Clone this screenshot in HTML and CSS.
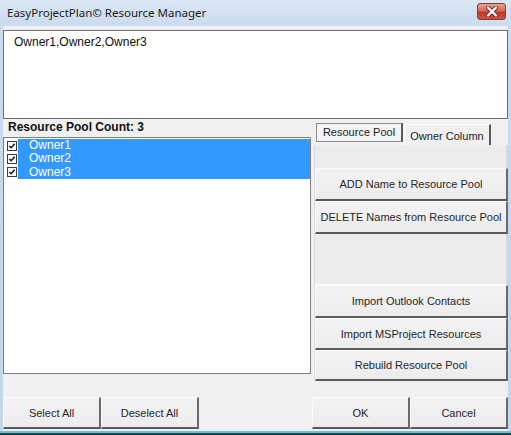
FILE: index.html
```html
<!DOCTYPE html>
<html>
<head>
<meta charset="utf-8">
<link rel="stylesheet" href="styles.css">
</head>
<body>
<div class="window">
  <div class="titlebar">
    <span class="title">EasyProjectPlan© Resource Manager</span>
    <div class="close">
      <svg width="14" height="11" viewBox="0 0 14 11"><path d="M3 1.5 L11 9.5 M11 1.5 L3 9.5" stroke="#6a2a22" stroke-width="4" stroke-linecap="round"/><path d="M3 1.5 L11 9.5 M11 1.5 L3 9.5" stroke="#fff" stroke-width="2.4" stroke-linecap="round"/></svg>
    </div>
  </div>
  <div class="client">
    <div class="textbox">Owner1,Owner2,Owner3</div>
    <div class="main">
      <div class="left">
        <div class="count">Resource Pool Count: 3</div>
        <div class="listbox">
          <div class="row"><span class="check"><svg width="9" height="9" viewBox="0 0 9 9"><path d="M1.5 4.5 L3.5 6.5 L7.5 2" fill="none" stroke="#111" stroke-width="1.6"/></svg></span><span class="item">Owner1</span></div>
          <div class="row"><span class="check"><svg width="9" height="9" viewBox="0 0 9 9"><path d="M1.5 4.5 L3.5 6.5 L7.5 2" fill="none" stroke="#111" stroke-width="1.6"/></svg></span><span class="item">Owner2</span></div>
          <div class="row"><span class="check"><svg width="9" height="9" viewBox="0 0 9 9"><path d="M1.5 4.5 L3.5 6.5 L7.5 2" fill="none" stroke="#111" stroke-width="1.6"/></svg></span><span class="item">Owner3</span></div>
        </div>
      </div>
      <div class="right">
        <div class="tabs">
          <div class="tab active">Resource Pool</div>
          <div class="tab">Owner Column</div>
        </div>
        <div class="panel">
          <div class="spacer s1"></div>
          <div class="btn h33">ADD Name to Resource Pool</div>
          <div class="btn h33">DELETE Names from Resource Pool</div>
          <div class="spacer s2"></div>
          <div class="btn h33">Import Outlook Contacts</div>
          <div class="btn h32">Import MSProject Resources</div>
          <div class="btn h31">Rebuild Resource Pool</div>
        </div>
      </div>
    </div>
    <div class="bottom">
      <div class="group">
        <div class="btn wide">Select All</div>
        <div class="btn wide">Deselect All</div>
      </div>
      <div class="group">
        <div class="btn wide">OK</div>
        <div class="btn wide">Cancel</div>
      </div>
    </div>
  </div>
  <div class="frame-bottom"></div>
</div>
</body>
</html>
```

FILE: styles.css
```css
html, body {
  margin: 0;
  padding: 0;
  width: 511px;
  height: 435px;
  overflow: hidden;
  background: #c6d8ec;
  font-family: "Liberation Sans", Arial, sans-serif;
}

.window {
  width: 511px;
  height: 435px;
  box-sizing: border-box;
  display: flex;
  flex-direction: column;
  background: linear-gradient(to bottom, #dbe7f4 0px, #c9dbee 26px, #c3d6ea 100%);
}

.titlebar {
  height: 26px;
  display: flex;
  align-items: center;
  justify-content: space-between;
  padding: 0 5px 0 7px;
}

.title {
  font-family: "Noto Sans", "Open Sans", sans-serif;
  font-size: 11.5px;
  color: #1b1b1b;
  margin-top: -1px;
}

.close {
  width: 29px;
  height: 17px;
  box-sizing: border-box;
  border: 1px solid #8a3a30;
  border-radius: 3px;
  background: linear-gradient(to bottom, #e9a393 0%, #d46a58 45%, #c0392b 55%, #d0503c 100%);
  display: flex;
  align-items: center;
  justify-content: center;
  margin-top: -4px;
}

.client {
  margin: 0 3px;
  height: 405px;
  box-sizing: border-box;
  background: #f0f0f0;
  padding-top: 4px;
  display: flex;
  flex-direction: column;
}

.textbox {
  height: 89px;
  box-sizing: border-box;
  border: 1px solid #6d6d6d;
  background: #fff;
  padding: 4px 10px;
  font-size: 12px;
  line-height: 14px;
  color: #111;
}

.main {
  display: grid;
  grid-template-columns: 308px 194px;
  column-gap: 3px;
  height: 262px;
}

.count {
  height: 18px;
  line-height: 17px;
  padding-left: 5px;
  font-size: 12px;
  font-weight: bold;
  color: #111;
}

.listbox {
  height: 237px;
  box-sizing: border-box;
  border: 1px solid #7f7f7f;
  background: #fff;
  padding-top: 1px;
}

.row {
  display: flex;
  height: 13.4px;
  align-items: stretch;
}

.check {
  width: 14px;
  display: flex;
  align-items: center;
  justify-content: flex-start;
}

.check svg {
  margin-left: 3px;
  box-sizing: border-box;
  border: 1px solid #3a3a3a;
  background: #fff;
  width: 10px;
  height: 10px;
}

.item {
  flex: 1;
  background: #3399ff;
  color: #fff;
  font-size: 12px;
  line-height: 13.4px;
  padding-left: 11px;
}

.right {
  display: flex;
  flex-direction: column;
}

.tabs {
  height: 26px;
  display: flex;
  align-items: flex-end;
  padding-left: 2px;
}

.tab {
  box-sizing: border-box;
  font-size: 11px;
  color: #222;
  display: flex;
  align-items: center;
  justify-content: center;
}

.tab.active {
  width: 87px;
  height: 19px;
  margin-bottom: 3px;
  border: 1px solid #8c8c8c;
  border-right: 2px solid #5a5a5a;
  background: #f4f4f4;
  padding-bottom: 2px;
}

.tab:not(.active) {
  width: 87px;
  height: 21px;
  margin-left: 1px;
  border-top: 1px solid #fcfcfc;
  border-left: 1px solid #fcfcfc;
  border-right: 2px solid #5a5a5a;
  padding-top: 1px;
}

.panel {
  height: 236px;
  display: flex;
  flex-direction: column;
  border-left: 1px solid #dcdcdc;
}

.spacer {
  box-sizing: border-box;
  background: #ececec;
  border-right: 2px solid #d8d8d8;
}

.s1 { height: 23px; }
.s2 { height: 51px; border-bottom: 1px solid #fafafa; }

.btn {
  box-sizing: border-box;
  display: flex;
  align-items: center;
  justify-content: center;
  font-size: 11px;
  color: #262626;
  background: linear-gradient(to bottom, #f3f3f3, #ececec);
  border-top: 1px solid #fbfbfb;
  border-left: 1px solid #fbfbfb;
  border-right: 2px solid #6a6a6a;
  border-bottom: 2px solid #5a5a5a;
}

.h33 { height: 33px; }
.h32 { height: 32px; }
.h31 { height: 31px; }

.bottom {
  margin-top: 16px;
  display: flex;
  justify-content: space-between;
  height: 32px;
}

.group {
  display: flex;
}

.btn.wide {
  width: 98px;
  height: 32px;
  font-size: 11px;
}

.frame-bottom {
  height: 4px;
  background: linear-gradient(to bottom, #6cc3d6 0, #6cc3d6 2px, #23424c 2px);
}
```
